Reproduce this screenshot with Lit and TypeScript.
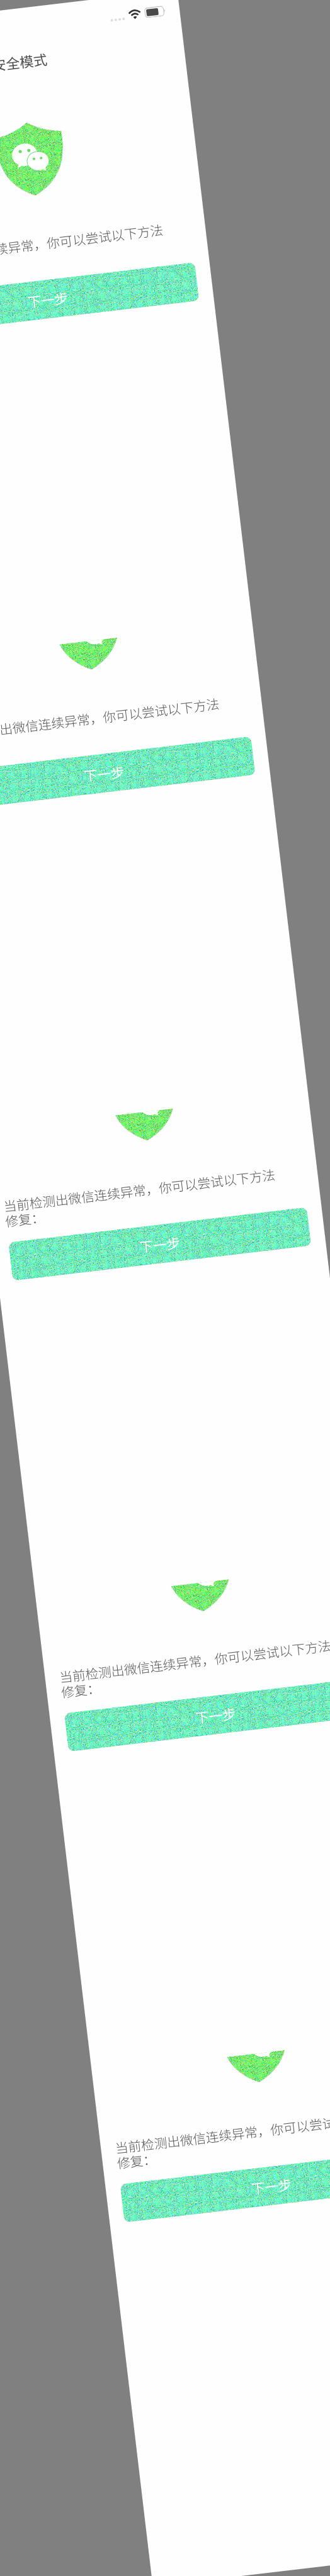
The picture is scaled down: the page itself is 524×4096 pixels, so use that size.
import { LitElement, html, css, svg } from "lit";
import { customElement, property } from "lit/decorators.js";

// Colour speckle laid over a solid fill and kept inside its shape.
const grain = svg`
  <filter id="grain" x="0" y="0" width="100%" height="100%" color-interpolation-filters="sRGB">
    <feTurbulence type="fractalNoise" baseFrequency="0.6" numOctaves="2" seed="7" result="noise"/>
    <feColorMatrix in="noise" type="matrix" values="1 0 0 0 0  0 1 0 0 0  0 0 1 0 0  0 0 0 0 1" result="speckle"/>
    <feComposite in="SourceGraphic" in2="speckle" operator="arithmetic" k1="0" k2="1" k3="2.4" k4="-1.1" result="mix"/>
    <feComposite in="mix" in2="SourceGraphic" operator="in"/>
  </filter>`;

@customElement("status-bar")
class StatusBar extends LitElement {
  static styles = css`
    :host { display: flex; justify-content: flex-end; align-items: flex-start; height: 90px; padding: 36px 35px 0 0; box-sizing: border-box; }
    svg { display: block; }
    .dots { margin: 18px 9px 0 0; }
    .wifi { margin: 1px 9px 0 0; }
  `;
  render() {
    return html`
      <svg class="dots" width="38" height="8" viewBox="0 0 38 8">
        ${[4, 14, 24, 34].map((x) => svg`<circle cx=${x} cy="3.5" r="3.2" fill="#dedae2"/>`)}
      </svg>
      <svg class="wifi" width="32" height="24" viewBox="0 0 32 24" fill="none" stroke="#333">
        <path d="M1.5 8.8 Q16 -4.6 30.5 8.8" stroke-width="4.2"/>
        <path d="M7.2 14.4 Q16 6.6 24.8 14.4" stroke-width="4"/>
        <path d="M16 24 L11.3 19.1 Q16 15.2 20.7 19.1 Z" fill="#333" stroke="none"/>
      </svg>
      <svg width="53" height="26" viewBox="0 0 53 26">
        <rect x="1" y="1" width="47" height="24" rx="7" fill="none" stroke="#bdb8c0" stroke-width="1.7"/>
        <rect x="4.5" y="4.3" width="30" height="17.6" rx="3" fill="#4a4a4a"/>
        <path d="M50 9.5 Q53 13 50 16.5 Z" fill="#bdb8c0"/>
      </svg>`;
  }
}

@customElement("shield-logo")
class ShieldLogo extends LitElement {
  static styles = css`
    :host { display: block; width: 168px; height: 186px; }
    svg { display: block; }
  `;
  render() {
    return html`
      <svg width="168" height="186" viewBox="330 287 168 186">
        <defs>${grain}</defs>
        <path filter="url(#grain)" fill="#5cf854" d="M414 288 Q450 313 497.500 318.500 Q499 350 493.500 375 Q482 441 414 472 Q346 441 334.500 375 Q329 350 330.500 318.500 Q378 313 414 288 Z"/>
        <path fill="#fff" d="M399.500 339.500 C417 339.500 431.500 352 431.500 367.500 C431.500 383 417 395.500 399.500 395.500 Q393 395.500 388.500 394 L378.500 399 L380.500 390 C372 385 367.500 377 367.500 367.500 C367.500 352 382 339.500 399.500 339.500 Z"/>
        <path fill="none" stroke="#7fe08a" stroke-width="1.800" d="M404.500 396 C399 377 412 362.500 431.500 363"/>
        <path fill="#fff" d="M431 364 C445.500 364 457.500 374 457.500 387 C457.500 394.500 453.500 401.500 447 405.500 L448.500 413.500 L440 409 Q436 410 431 410 C416.500 410 404.500 400 404.500 387 C404.500 374 416.500 364 431 364 Z"/>
        <g fill="#68dd62">
          <circle cx="389" cy="358.200" r="4"/><circle cx="410.800" cy="358" r="4"/>
          <circle cx="421.300" cy="380.400" r="3.300"/><circle cx="439.200" cy="380.400" r="3.300"/>
        </g>
      </svg>`;
  }
}

@customElement("repair-section")
class RepairSection extends LitElement {
  @property({ type: Boolean, reflect: true }) first = false;
  static styles = css`
    :host { display: flex; flex-direction: column; height: 1192px; overflow: hidden; }
    :host([first]) { height: 1600px; }
    .header { height: 287px; flex: none; }
    .title { margin-top: 19px; text-align: center; font-size: 34.5px; line-height: 50px; color: #4c4c4c; }
    .crop { flex: none; height: 73px; overflow: hidden; display: flex; align-items: flex-end; justify-content: center; }
    .crop.full { height: 186px; }
    .crop shield-logo { flex: none; }
    .hint { flex: none; margin: 102px 0 0 36px; width: 700px; font-size: 32.66px; line-height: 38.3px; color: #585858; font-weight: 300; }
    .next { flex: none; display: grid; place-items: center; font: inherit; border: 0; padding: 0; margin: 34px 37px 0; height: 97.5px; background: none; }
    .next > * { grid-area: 1 / 1; }
    .fill { display: block; width: 754px; height: 97.5px; }
    .label { color: #fff; font-size: 34px; line-height: 94px; padding-top: 3px; font-weight: 400; z-index: 1; }
  `;
  render() {
    return html`
      ${this.first
        ? html`<div class="header"><status-bar></status-bar><div class="title">安全模式</div></div>`
        : ""}
      <div class="crop ${this.first ? "full" : ""}"><shield-logo></shield-logo></div>
      <div class="hint">当前检测出微信连续异常，你可以尝试以下方法<br />修复：</div>
      <button class="next">
        <svg class="fill" viewBox="0 0 754 97.5"><defs>${grain}</defs><rect width="754" height="97.5" rx="17" fill="#56f8ac" filter="url(#grain)"/></svg>
        <span class="label">下一步</span>
      </button>`;
  }
}

@customElement("app-root")
class AppRoot extends LitElement {
  static styles = css`
    :host { display: block; width: 524px; height: 4096px; overflow: hidden; background: #808080; font-family: "Noto Sans CJK SC", sans-serif; }
    .scale { width: 828px; height: 6476px; transform: scale(0.63285, 0.63249); transform-origin: 0 0; }
    .page { width: 828px; height: 6476px; background: #fefefe; transform: rotate(-6.75deg); }
  `;
  render() {
    return html`<div class="scale"><div class="page">
      <repair-section first></repair-section>
      ${[1, 2, 3, 4].map(() => html`<repair-section></repair-section>`)}
    </div></div>`;
  }
}
